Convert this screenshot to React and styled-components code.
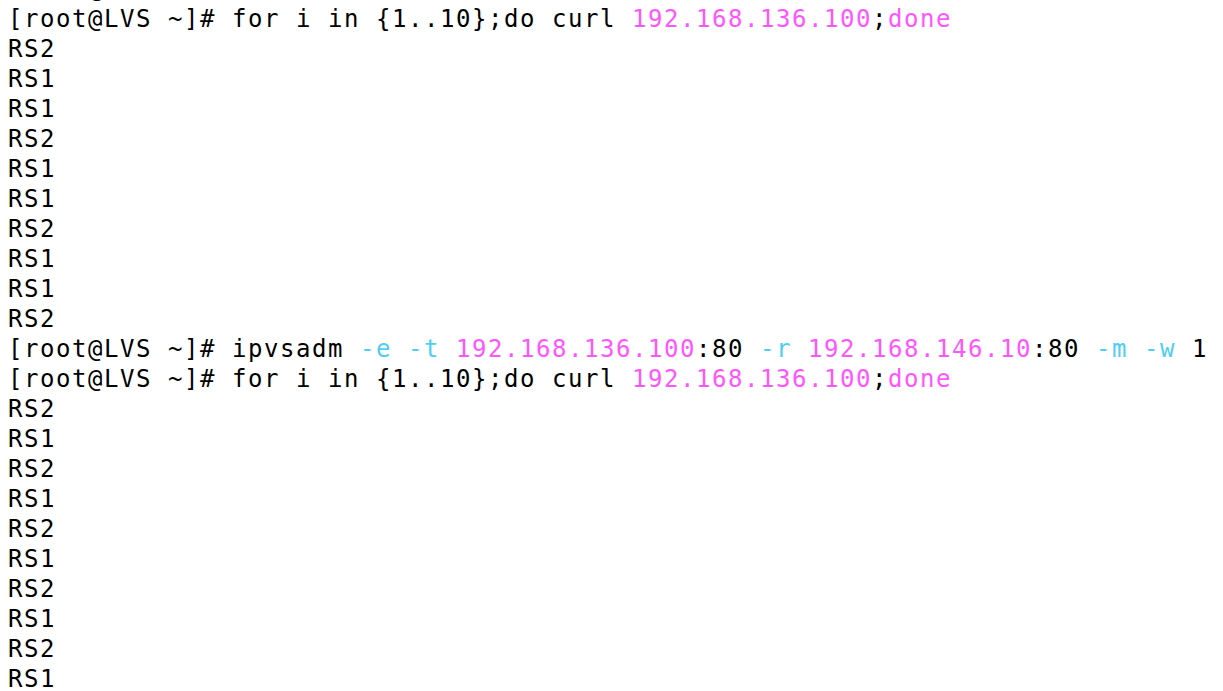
import styled, { createGlobalStyle } from "styled-components";

const GlobalStyle = createGlobalStyle`
  html, body {
    margin: 0;
    padding: 0;
    background: #ffffff;
    overflow: hidden;
  }
`;

const Screen = styled.div`
  width: 1223px;
  height: 691px;
  overflow: hidden;
  background: #ffffff;
`;

const Scroll = styled.div`
  margin-top: -26px;
  padding-left: 8px;
  font-family: "DejaVu Sans Mono", "Liberation Mono", monospace;
  font-size: 24px;
  letter-spacing: 1.55px;
  line-height: 30px;
  color: #000000;
  white-space: pre;
`;

const Line = styled.div`
  height: 30px;
`;

const Tok = styled.span`
  color: ${(p) => (p.$kind === "num" ? "#ff55ff" : p.$kind === "opt" ? "#4fcdf4" : "#000000")};
`;

const prompt = "[root@LVS ~]# ";

const forLoop = [
  { t: prompt + "for i in {1..10};do curl " },
  { t: "192.168.136.100", k: "num" },
  { t: ";" },
  { t: "done", k: "num" },
];

const ipvsadm = [
  { t: prompt + "ipvsadm " },
  { t: "-e", k: "opt" },
  { t: " " },
  { t: "-t", k: "opt" },
  { t: " " },
  { t: "192.168.136.100", k: "num" },
  { t: ":80 " },
  { t: "-r", k: "opt" },
  { t: " " },
  { t: "192.168.146.10", k: "num" },
  { t: ":80 " },
  { t: "-m", k: "opt" },
  { t: " " },
  { t: "-w", k: "opt" },
  { t: " 1" },
];

const firstRun = ["RS2", "RS1", "RS1", "RS2", "RS1", "RS1", "RS2", "RS1", "RS1", "RS2"];
const secondRun = ["RS2", "RS1", "RS2", "RS1", "RS2", "RS1", "RS2", "RS1", "RS2", "RS1"];

const lines = [
  [{ t: "[root@LVS ~]#" }],
  forLoop,
  ...firstRun.map((r) => [{ t: r }]),
  ipvsadm,
  forLoop,
  ...secondRun.map((r) => [{ t: r }]),
];

export default function App() {
  return (
    <>
      <GlobalStyle />
      <Screen>
        <Scroll>
          {lines.map((parts, i) => (
            <Line key={i}>
              {parts.map((p, j) => (
                <Tok key={j} $kind={p.k}>
                  {p.t}
                </Tok>
              ))}
            </Line>
          ))}
        </Scroll>
      </Screen>
    </>
  );
}
